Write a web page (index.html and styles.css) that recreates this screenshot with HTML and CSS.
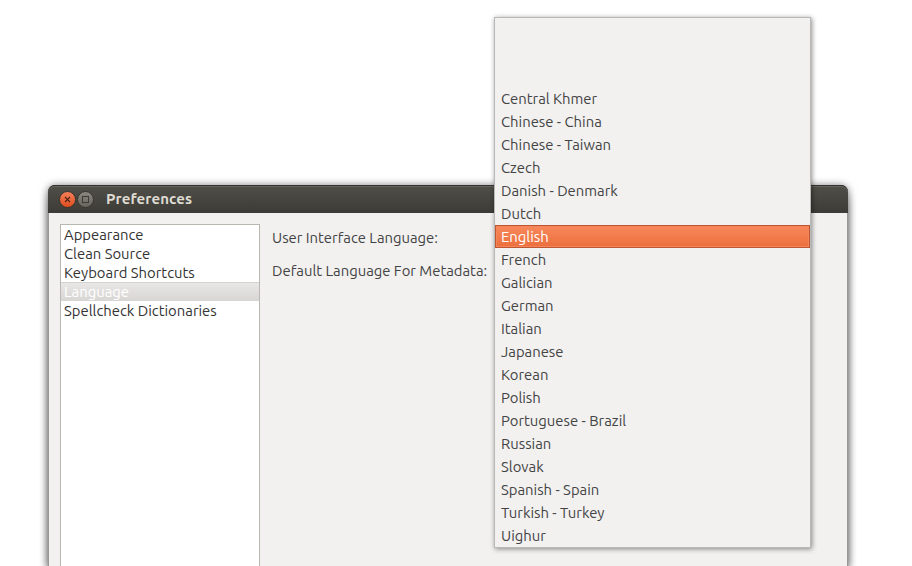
FILE: index.html
```
<!DOCTYPE html>
<html lang="en">
<head>
<meta charset="utf-8">
<title>Preferences</title>
<link rel="stylesheet" href="styles.css">
</head>
<body>
<main class="window">
  <header class="titlebar">
    <svg class="controls" width="38" height="20" viewBox="0 0 38 20">
      <defs>
        <linearGradient id="close" x1="0" y1="0" x2="0" y2="1"><stop offset="0" stop-color="#f5825b"/><stop offset="1" stop-color="#df4b1c"/></linearGradient>
        <linearGradient id="max" x1="0" y1="0" x2="0" y2="1"><stop offset="0" stop-color="#8a8880"/><stop offset="1" stop-color="#65635c"/></linearGradient>
      </defs>
      <circle cx="9.5" cy="10.5" r="8" fill="url(#close)" stroke="#34332e" stroke-width="1"/>
      <path d="M7 8l5 5M12 8l-5 5" stroke="#4b2417" stroke-width="1.1"/>
      <circle cx="27.5" cy="10.5" r="8" fill="url(#max)" stroke="#34332e" stroke-width="1"/>
      <rect x="24.5" y="7.5" width="6" height="6" fill="none" stroke="#3c3b37"/>
    </svg>
    <h1 class="title">Preferences</h1>
  </header>
  <div class="content">
    <ul class="sections">
      <li>Appearance</li>
      <li>Clean Source</li>
      <li>Keyboard Shortcuts</li>
      <li class="selected">Language</li>
      <li>Spellcheck Dictionaries</li>
    </ul>
    <div class="fields">
      <label class="ui-label">User Interface Language:</label>
      <label class="meta-label">Default Language For Metadata:</label>
    </div>
  </div>
</main>
<ul class="menu">
  <li>Central Khmer</li>
  <li>Chinese - China</li>
  <li>Chinese - Taiwan</li>
  <li>Czech</li>
  <li>Danish - Denmark</li>
  <li>Dutch</li>
  <li class="active">English</li>
  <li>French</li>
  <li>Galician</li>
  <li>German</li>
  <li>Italian</li>
  <li>Japanese</li>
  <li>Korean</li>
  <li>Polish</li>
  <li>Portuguese - Brazil</li>
  <li>Russian</li>
  <li>Slovak</li>
  <li>Spanish - Spain</li>
  <li>Turkish - Turkey</li>
  <li>Uighur</li>
</ul>
</body>
</html>
```
FILE: styles.css
```
* { box-sizing: border-box; }
body {
  margin: 0;
  height: 566px;
  padding: 185px 64px 0 48px;
  overflow: hidden;
  position: relative;
  background: #fff;
  font: 14.84px/19px Ubuntu, "Noto Sans", sans-serif;
  color: #444;
}
ul { list-style: none; margin: 0; padding: 0; }
li, label, h1 { white-space: nowrap; }
.window {
  height: 381px;
  display: flex;
  flex-direction: column;
  background: #f2f1f0;
  border-radius: 7px 7px 0 0;
  box-shadow: 0 1px 8px rgba(0,0,0,.6), 0 12px 8px rgba(0,0,0,.3);
}
.titlebar {
  height: 28px;
  display: flex;
  align-items: center;
  padding-left: 10px;
  border-radius: 7px 7px 0 0;
  background: linear-gradient(#504f48, #3c3b37);
  box-shadow: inset 0 1px #33322e, inset 0 2px #66655d;
}
.controls { flex: none; }
.title {
  margin: -2px 0 0 10px;
  font-size: 15px;
  letter-spacing: .08px;
  font-weight: 700;
  color: #dfdbd2;
}
.content {
  flex: 1;
  display: flex;
  padding: 11px 11px 0;
  border: solid #989794;
  border-width: 0 1px;
}
.sections {
  width: 200px;
  background: #fff;
  border: 1px solid #bab6b0;
  border-bottom: 0;
  color: #333;
}
.sections li { height: 19px; padding-left: 3px; line-height: 20px; }
.sections .selected {
  color: #fff;
  background: linear-gradient(#e9e8e7, #d8d6d3);
  box-shadow: inset 0 1px #d3d2ce;
}
.fields {
  display: flex;
  flex-direction: column;
  gap: 14px;
  padding: 4px 0 0 12px;
}
.menu {
  position: absolute;
  left: 494px;
  top: 17px;
  width: 317px;
  height: 531px;
  padding-top: 69px;
  background: #f2f1f0;
  border: 1px solid #bab8b6;
  box-shadow: 1px 1px 5px rgba(0,0,0,.45);
}
.menu li { height: 23px; line-height: 24px; padding-left: 6px; }
.menu .active {
  color: #fff;
  background: linear-gradient(#f88a5d, #ec6d3b);
  box-shadow: inset 0 0 0 1px #bd5631, inset 0 0 0 2px #f48459;
}
```
